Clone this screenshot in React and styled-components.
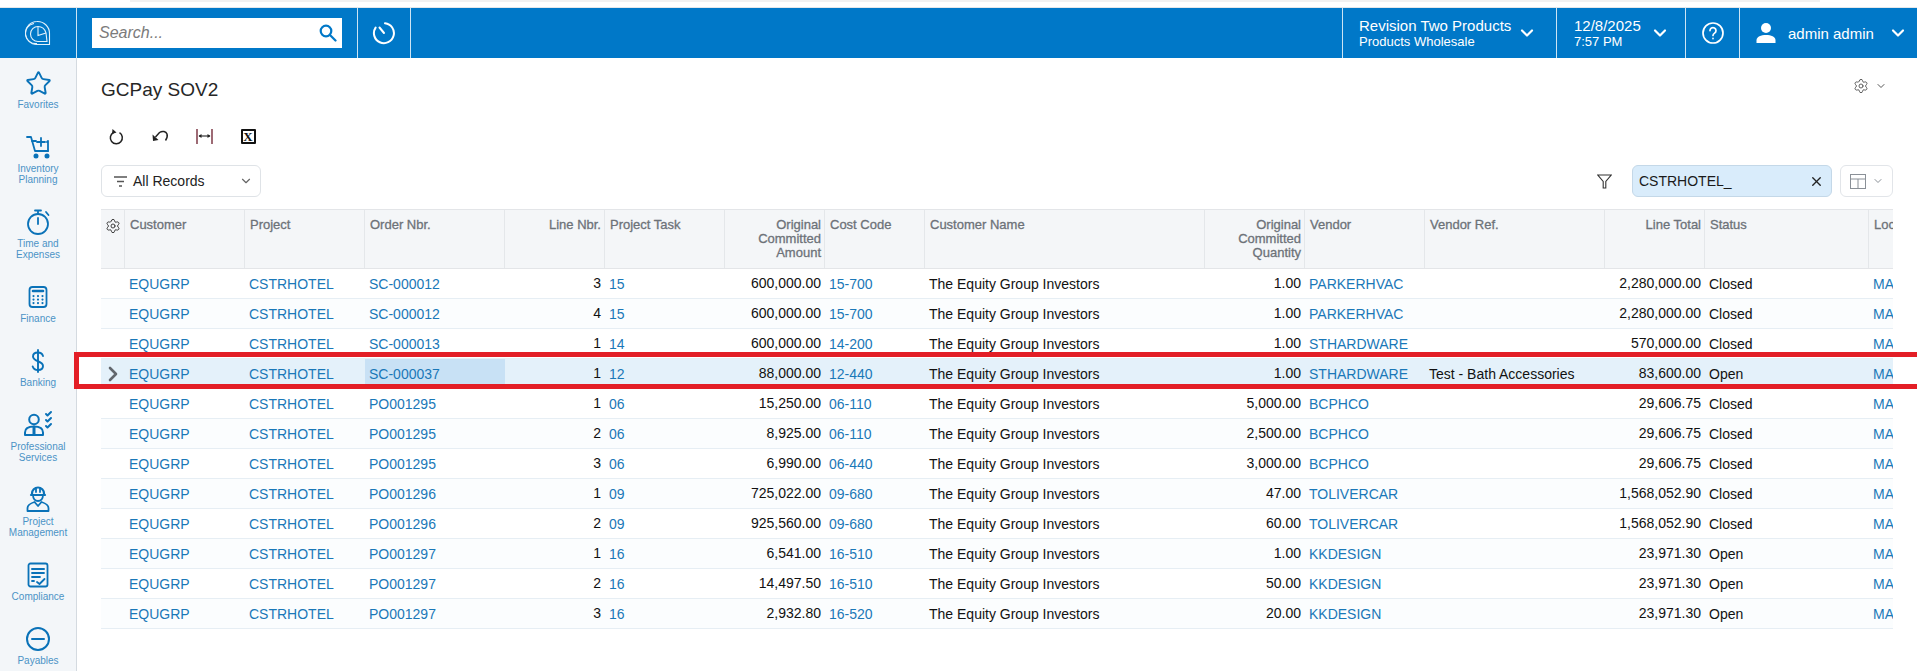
import React from 'react';
import styled, { createGlobalStyle } from 'styled-components';
import { ChevronDown, ChevronRight, Settings, Star, X } from 'lucide-react';

const GlobalStyle = createGlobalStyle`
  html, body {
    margin: 0;
    padding: 0;
    background: #fff;
    font-family: "Liberation Sans", Arial, sans-serif;
  }
  * { box-sizing: border-box; }
`;

const Page = styled.div`
  position: relative;
  width: 1917px;
  height: 671px;
  overflow: hidden;
  background: #fff;
`;

const TopStrip = styled.div`
  height: 8px;
  border-bottom: 1px solid #e4e7ea;
  padding-left: 130px;
`;

const StripBar = styled.div`
  width: 1690px;
  height: 2px;
  background: #f1f1f1;
`;

const HeaderBar = styled.header`
  display: flex;
  height: 50px;
  background: #0078c8;
  color: #fff;
`;

const HeaderCell = styled.div`
  display: flex;
  align-items: center;
  flex: none;
  width: ${(p) => p.$width}px;
  padding-left: ${(p) => p.$pad || 0}px;
  justify-content: ${(p) => (p.$center ? 'center' : 'flex-start')};
  border-right: ${(p) => (p.$last ? 'none' : '1px solid rgba(255,255,255,0.8)')};
  border-left: ${(p) => (p.$first ? '1px solid rgba(255,255,255,0.8)' : 'none')};
`;

const HeaderSpacer = styled.div`
  flex: 1;
`;

const SearchBox = styled.div`
  display: flex;
  align-items: center;
  justify-content: space-between;
  width: 250px;
  height: 30px;
  padding: 0 5px 0 7px;
  background: #fff;
  color: #0078c8;
`;

const SearchInput = styled.input`
  width: 200px;
  border: 0;
  outline: 0;
  padding: 0;
  font: italic 16px "Liberation Sans", Arial, sans-serif;
  &::placeholder {
    color: #7b7b7b;
    opacity: 1;
  }
`;

const StackedText = styled.div`
  display: flex;
  flex-direction: column;
  width: ${(p) => p.$width}px;
`;

const MainLine = styled.span`
  font-size: 15px;
  line-height: 17px;
`;

const SubLine = styled.span`
  font-size: 13px;
  line-height: 16px;
`;

const UserName = styled.span`
  font-size: 15px;
  margin: 0 14px 0 12px;
`;

const Body = styled.div`
  display: flex;
  height: 613px;
`;

const Sidebar = styled.nav`
  flex: none;
  width: 77px;
  background: #f3f6f9;
  border-right: 1px solid #d4dae0;
  overflow: hidden;
`;

const NavItem = styled.div`
  display: flex;
  flex-direction: column;
  align-items: center;
  padding: 9px 0 12px;
  color: #0a72b8;
`;

const NavIcon = styled.div`
  display: flex;
  align-items: center;
  justify-content: center;
  height: 32px;
`;

const NavLabel = styled.div`
  font-size: 10px;
  line-height: 11px;
  text-align: center;
  color: #4b93c6;
  white-space: pre-line;
`;

const Main = styled.main`
  flex: 1;
  min-width: 0;
  padding: 21px 24px 0;
`;

const TitleRow = styled.div`
  display: flex;
  align-items: center;
  justify-content: space-between;
  height: 22px;
`;

const Title = styled.h1`
  margin: 0;
  font-size: 19px;
  font-weight: 400;
  color: #262626;
`;

const PageSettings = styled.div`
  display: flex;
  align-items: center;
  gap: 6px;
  margin-right: 6px;
  margin-top: -8px;
  color: #555;
`;

const Toolbar = styled.div`
  display: flex;
  align-items: center;
  height: 32px;
  margin: 19px 0 13px -7px;
`;

const ToolButton = styled.div`
  display: flex;
  align-items: center;
  justify-content: center;
  width: 44px;
  height: 32px;
  color: #222;
`;

const ExcelMark = styled.span`
  display: flex;
  align-items: center;
  justify-content: center;
  width: 15px;
  height: 15px;
  border: 2px solid #111;
  border-radius: 1px;
  font: bold 13px/1 "Liberation Serif", "Times New Roman", serif;
  color: #111;
`;

const FilterRow = styled.div`
  display: flex;
  align-items: center;
  height: 32px;
`;

const ViewSelect = styled.div`
  display: flex;
  align-items: center;
  width: 160px;
  height: 32px;
  padding: 0 7px 0 12px;
  border: 1px solid #dfe3e7;
  border-radius: 6px;
  font-size: 14px;
  color: #222;
`;

const ViewName = styled.span`
  flex: 1;
  margin-left: 6px;
`;

const FilterIcon = styled.div`
  display: flex;
  margin-left: auto;
  margin-right: 20px;
  color: #333;
`;

const SearchPill = styled.div`
  display: flex;
  align-items: center;
  justify-content: space-between;
  width: 200px;
  height: 32px;
  padding: 0 7px 0 6px;
  background: #d9ecfb;
  border: 1px solid #c4d8e8;
  border-radius: 6px;
  font-size: 14px;
  color: #1a1a1a;
`;

const ColumnsButton = styled.div`
  display: flex;
  align-items: center;
  justify-content: center;
  gap: 6px;
  width: 53px;
  height: 32px;
  margin-left: 8px;
  border: 1px solid #e2e5e9;
  border-radius: 6px;
  color: #8a9097;
`;

const GridWrap = styled.div`
  width: 1792px;
  margin-top: 12px;
  overflow: hidden;
`;

const COLUMNS = '24px 120px 120px 140px 100px 120px 100px 100px 280px 100px 120px 180px 100px 164px 24px';

const HeadRow = styled.div`
  display: grid;
  grid-template-columns: ${COLUMNS};
  height: 60px;
  background: #f4f6f8;
  border-top: 1px solid #e3e5e8;
  border-bottom: 1px solid #e3e5e8;
`;

const HeadCell = styled.div`
  padding: 8px ${(p) => (p.$right ? 3 : 2)}px 0 5px;
  border-right: ${(p) => (p.$open ? 'none' : '1px solid #e4e7ea')};
  font-size: 13px;
  line-height: 14px;
  color: #6d7278;
  text-align: ${(p) => (p.$right ? 'right' : 'left')};
  white-space: pre-line;
  -webkit-text-stroke: 0.3px #6d7278;
`;

const GearCell = styled(HeadCell)`
  padding: 8px 0 0 4px;
  -webkit-text-stroke: 0;
  color: #333;
`;

const DataRow = styled.div`
  display: grid;
  grid-template-columns: ${COLUMNS};
  height: 30px;
  border-bottom: 1px solid #e6eef4;
  background: ${(p) => (p.$selected ? '#e4f1fa' : p.$alt ? '#fbfdfe' : '#fff')};
`;

const Cell = styled.div`
  display: flex;
  align-items: center;
  justify-content: ${(p) => (p.$right ? 'flex-end' : 'flex-start')};
  padding: ${(p) => (p.$right ? '0 4px 2px 0' : '0 0 0 4px')};
  font-size: 14px;
  color: ${(p) => (p.$link ? '#1a78b8' : '#111')};
  background: ${(p) => (p.$active ? '#c8e1f5' : 'transparent')};
  white-space: nowrap;
  overflow: hidden;
`;

const MarkerCell = styled.div`
  display: flex;
  align-items: center;
  justify-content: center;
  color: #62676d;
`;

const RedBox = styled.div`
  position: absolute;
  left: 74px;
  right: -12px;
  top: 352px;
  height: 37px;
  border: 5px solid #e31e26;
`;

const Icon = ({ children, strokeWidth = 1.8 }) => (
  <svg width="32" height="32" viewBox="0 0 32 32" fill="none" stroke="currentColor" strokeWidth={strokeWidth} strokeLinecap="round" strokeLinejoin="round">
    {children}
  </svg>
);

const LogoIcon = () => (
  <svg width="26" height="26" viewBox="0 0 26 26" fill="none" stroke="#e4f2fb" strokeWidth="1.100">
    <path d="M12 1.500a11.500 11.500 0 1 0 0 23h12.500V14A12 12 0 0 0 12 1.500z" />
    <path d="M9 3.500a10 10 0 0 0 3 20" />
    <path d="M13 6.500a7.500 7.500 0 1 0 0 15h9l-1-8.500c-1-3.500-4-6.500-8-6.500z" />
    <path d="M13 6.500v9l8-2.500" />
  </svg>
);

const SearchGlyph = () => (
  <svg width="18" height="18" viewBox="0 0 18 18" fill="none" stroke="#0078c8" strokeWidth="2.200" strokeLinecap="round">
    <circle cx="7" cy="7" r="5.300" />
    <path d="M11 11l5.500 5.500" />
  </svg>
);

const HistoryIcon = () => (
  <svg width="24" height="24" viewBox="0 0 24 24" fill="none" stroke="#fff" strokeWidth="2" strokeLinecap="round">
    <path d="M13 2.200A10 10 0 1 1 3.600 6.600" />
    <path d="M7.500 6.500L12 12" />
  </svg>
);

const HelpIcon = () => (
  <svg width="22" height="22" viewBox="0 0 22 22" fill="none" stroke="#fff" strokeWidth="1.700" strokeLinecap="round">
    <circle cx="11" cy="11" r="10" />
    <path d="M8 8.600a3 3 0 1 1 4.600 2.500c-1 .7-1.600 1.200-1.600 2.400" />
    <path d="M11 16.400v.2" />
  </svg>
);

const UserIcon = () => (
  <svg width="20" height="22" viewBox="0 0 20 22" fill="#fff">
    <circle cx="10" cy="6" r="5" />
    <path d="M0.500 21v-2.500C0.500 14.500 5 13 10 13s9.500 1.500 9.500 5.500V21z" />
  </svg>
);

const CartIcon = () => (
  <Icon>
    <path d="M5 6h4l4 14h13" />
    <path d="M10 10h4" />
    <path d="M25 11l1-1v10" />
    <path d="M19 7v8M15 11h8" />
    <circle cx="14" cy="25" r="1.600" fill="currentColor" />
    <circle cx="25" cy="25" r="1.600" fill="currentColor" />
  </Icon>
);

const TimerIcon = () => (
  <Icon>
    <circle cx="16" cy="18" r="10" />
    <path d="M16 12v6M13 4.500h6M16 4.500V8M24 6l2.500 3" />
  </Icon>
);

const FinanceIcon = () => (
  <Icon>
    <rect x="7.500" y="6" width="17" height="20" rx="3" />
    <path d="M11 10h10" strokeWidth="2.600" />
    <path d="M11.500 15v.1M16 15v.1M20.500 15v.1M11.500 18.500v.1M16 18.500v.1M20.500 18.500v.1M11.500 22v.1M16 22v.1M20.500 22v.1" strokeWidth="2.200" />
  </Icon>
);

const DollarIcon = () => (
  <Icon strokeWidth={1.9}>
    <path d="M21 11c-.8-2.500-2.800-3.500-5-3.500-3 0-5 1.600-5 4 0 5.500 10 4 10 9.500 0 2.500-2 4-5 4-2.600 0-4.600-1.200-5.300-3.500" />
    <path d="M16 5v22" />
  </Icon>
);

const ProServicesIcon = () => (
  <Icon strokeWidth={2}>
    <circle cx="12" cy="10.500" r="4.800" />
    <path d="M3 26v-2.500C3 19 7 17.500 12 17.500s9 1.500 9 6V26z" />
    <path d="M12 18v7" strokeWidth="3" />
    <path d="M24 5l1.500 1.500L29 3M24 11l1.500 1.500L29 9M24 17l1.500 1.500L29 15" />
  </Icon>
);

const ProjectIcon = () => (
  <Icon>
    <path d="M10 11V9.500a6 6 0 0 1 12 0V11" strokeWidth="2.200" />
    <path d="M14 4.500V8M18 4.500V8" />
    <path d="M9 11h14" strokeWidth="2.200" />
    <path d="M11 11c0 3.500 2 6 5 6s5-2.500 5-6" />
    <path d="M5.500 27v-3c0-3 4-5 7-6l3.500 4 3.500-4c3 1 7 3 7 6v3z" />
  </Icon>
);

const ComplianceIcon = () => (
  <Icon>
    <rect x="6.500" y="4.500" width="19" height="23" rx="2" />
    <path d="M10 10h12" strokeWidth="2" />
    <path d="M10 14h12M10 18h8M10 22h2" />
    <path d="M15 23l2.500 2 5-5" />
  </Icon>
);

const PayablesIcon = () => (
  <Icon strokeWidth={2}>
    <circle cx="16" cy="16" r="11" />
    <path d="M10 16h12" />
  </Icon>
);

const RefreshIcon = () => (
  <svg width="15" height="17" viewBox="0 0 15 17" fill="none" stroke="currentColor" strokeWidth="1.500">
    <path d="M4.500 4.500a6 6 0 1 0 6 .2" />
    <path d="M3.500 1l4 3.400-4.500 1.700z" fill="currentColor" stroke="none" />
  </svg>
);

const UndoIcon = () => (
  <svg width="17" height="12" viewBox="0 0 17 12" fill="none" stroke="currentColor" strokeWidth="1.500">
    <path d="M3.500 7l4-4.500c3-2 6.500-1 7.500 1.500.6 2 0 4.500-1.500 6.500" />
    <path d="M.5 4.500L1 11l5.500-1z" fill="currentColor" stroke="none" />
  </svg>
);

const FitIcon = () => (
  <svg width="17" height="15" viewBox="0 0 17 15" fill="none">
    <path d="M1 0v15M16 0v15" stroke="#6a1c2c" strokeWidth="1.300" />
    <path d="M3 7h11" stroke="#222" strokeWidth="1.100" />
    <path d="M2.500 7l3-2v4zM14.500 7l-3-2v4z" fill="#222" />
  </svg>
);

const ListFilterIcon = () => (
  <svg width="13" height="11" viewBox="0 0 13 11" stroke="#555" strokeWidth="1.400">
    <path d="M0 1h13M3 5.500h7M5 10h3" />
  </svg>
);

const FunnelIcon = () => (
  <svg width="15" height="15" viewBox="0 0 15 15" fill="none" stroke="currentColor" strokeWidth="1.100">
    <path d="M.8 1h13.400L8.800 7.500V14H6.200V7.500z" />
  </svg>
);

const TableIcon = () => (
  <svg width="16" height="15" viewBox="0 0 16 15" fill="none" stroke="#8a9097" strokeWidth="1">
    <rect x=".5" y=".5" width="15" height="14" />
    <path d="M.5 5h15M8 5v9.500" />
  </svg>
);

const navItems = [
  { label: 'Favorites', icon: <Star size={27} strokeWidth={1.7} /> },
  { label: 'Inventory\nPlanning', icon: <CartIcon /> },
  { label: 'Time and\nExpenses', icon: <TimerIcon /> },
  { label: 'Finance', icon: <FinanceIcon /> },
  { label: 'Banking', icon: <DollarIcon /> },
  { label: 'Professional\nServices', icon: <ProServicesIcon /> },
  { label: 'Project\nManagement', icon: <ProjectIcon /> },
  { label: 'Compliance', icon: <ComplianceIcon /> },
  { label: 'Payables', icon: <PayablesIcon /> },
];

const heads = [
  ['Customer'], ['Project'], ['Order Nbr.'], ['Line Nbr.', true], ['Project Task'],
  ['Original\nCommitted\nAmount', true], ['Cost Code'], ['Customer Name'],
  ['Original\nCommitted\nQuantity', true], ['Vendor'], ['Vendor Ref.'], ['Line Total', true], ['Status'],
];

const rows = [
  ['SC-000012', 3, '15', '600,000.00', '15-700', '1.00', 'PARKERHVAC', '', '2,280,000.00', 'Closed'],
  ['SC-000012', 4, '15', '600,000.00', '15-700', '1.00', 'PARKERHVAC', '', '2,280,000.00', 'Closed'],
  ['SC-000013', 1, '14', '600,000.00', '14-200', '1.00', 'STHARDWARE', '', '570,000.00', 'Closed'],
  ['SC-000037', 1, '12', '88,000.00', '12-440', '1.00', 'STHARDWARE', 'Test - Bath Accessories', '83,600.00', 'Open'],
  ['PO001295', 1, '06', '15,250.00', '06-110', '5,000.00', 'BCPHCO', '', '29,606.75', 'Closed'],
  ['PO001295', 2, '06', '8,925.00', '06-110', '2,500.00', 'BCPHCO', '', '29,606.75', 'Closed'],
  ['PO001295', 3, '06', '6,990.00', '06-440', '3,000.00', 'BCPHCO', '', '29,606.75', 'Closed'],
  ['PO001296', 1, '09', '725,022.00', '09-680', '47.00', 'TOLIVERCAR', '', '1,568,052.90', 'Closed'],
  ['PO001296', 2, '09', '925,560.00', '09-680', '60.00', 'TOLIVERCAR', '', '1,568,052.90', 'Closed'],
  ['PO001297', 1, '16', '6,541.00', '16-510', '1.00', 'KKDESIGN', '', '23,971.30', 'Open'],
  ['PO001297', 2, '16', '14,497.50', '16-510', '50.00', 'KKDESIGN', '', '23,971.30', 'Open'],
  ['PO001297', 3, '16', '2,932.80', '16-520', '20.00', 'KKDESIGN', '', '23,971.30', 'Open'],
];

const App = () => {
  return (
    <Page>
      <GlobalStyle />
      <TopStrip><StripBar /></TopStrip>
      <HeaderBar>
        <HeaderCell $width={77} $center><LogoIcon /></HeaderCell>
        <HeaderCell $width={281} $pad={15}>
          <SearchBox>
            <SearchInput placeholder="Search..." />
            <SearchGlyph />
          </SearchBox>
        </HeaderCell>
        <HeaderCell $width={53} $center><HistoryIcon /></HeaderCell>
        <HeaderSpacer />
        <HeaderCell $width={215} $pad={16} $first>
          <StackedText $width={158}>
            <MainLine>Revision Two Products</MainLine>
            <SubLine>Products Wholesale</SubLine>
          </StackedText>
          <ChevronDown size={20} strokeWidth={2.6} />
        </HeaderCell>
        <HeaderCell $width={129} $pad={17}>
          <StackedText $width={76}>
            <MainLine>12/8/2025</MainLine>
            <SubLine>7:57 PM</SubLine>
          </StackedText>
          <ChevronDown size={20} strokeWidth={2.6} />
        </HeaderCell>
        <HeaderCell $width={54} $center><HelpIcon /></HeaderCell>
        <HeaderCell $width={177} $pad={16} $last>
          <UserIcon />
          <UserName>admin admin</UserName>
          <ChevronDown size={20} strokeWidth={2.6} />
        </HeaderCell>
      </HeaderBar>
      <Body>
        <Sidebar>
          {navItems.map((item) => (
            <NavItem key={item.label}>
              <NavIcon>{item.icon}</NavIcon>
              <NavLabel>{item.label}</NavLabel>
            </NavItem>
          ))}
        </Sidebar>
        <Main>
          <TitleRow>
            <Title>GCPay SOV2</Title>
            <PageSettings>
              <Settings size={16} strokeWidth={1.4} />
              <ChevronDown size={12} strokeWidth={2} />
            </PageSettings>
          </TitleRow>
          <Toolbar>
            <ToolButton><RefreshIcon /></ToolButton>
            <ToolButton><UndoIcon /></ToolButton>
            <ToolButton><FitIcon /></ToolButton>
            <ToolButton><ExcelMark>X</ExcelMark></ToolButton>
          </Toolbar>
          <FilterRow>
            <ViewSelect>
              <ListFilterIcon />
              <ViewName>All Records</ViewName>
              <ChevronDown size={14} color="#666" />
            </ViewSelect>
            <FilterIcon><FunnelIcon /></FilterIcon>
            <SearchPill>
              CSTRHOTEL_
              <X size={15} strokeWidth={2.2} color="#222" />
            </SearchPill>
            <ColumnsButton>
              <TableIcon />
              <ChevronDown size={12} color="#8a9097" />
            </ColumnsButton>
          </FilterRow>
          <GridWrap>
            <HeadRow>
              <GearCell><Settings size={16} strokeWidth={1.4} /></GearCell>
              {heads.map(([label, right]) => (
                <HeadCell key={label} $right={right}>{label}</HeadCell>
              ))}
              <HeadCell $open>Loc</HeadCell>
            </HeadRow>
            {rows.map((r, i) => {
              const selected = i === 3;
              return (
                <DataRow key={i} $selected={selected} $alt={i % 2 === 1}>
                  <MarkerCell>{selected && <ChevronRight size={24} strokeWidth={2.6} />}</MarkerCell>
                  <Cell $link>EQUGRP</Cell>
                  <Cell $link>CSTRHOTEL</Cell>
                  <Cell $link $active={selected}>{r[0]}</Cell>
                  <Cell $right>{r[1]}</Cell>
                  <Cell $link>{r[2]}</Cell>
                  <Cell $right>{r[3]}</Cell>
                  <Cell $link>{r[4]}</Cell>
                  <Cell>The Equity Group Investors</Cell>
                  <Cell $right>{r[5]}</Cell>
                  <Cell $link>{r[6]}</Cell>
                  <Cell>{r[7]}</Cell>
                  <Cell $right>{r[8]}</Cell>
                  <Cell>{r[9]}</Cell>
                  <Cell $link>MA</Cell>
                </DataRow>
              );
            })}
          </GridWrap>
        </Main>
      </Body>
      <RedBox />
    </Page>
  );
};

export default App;
